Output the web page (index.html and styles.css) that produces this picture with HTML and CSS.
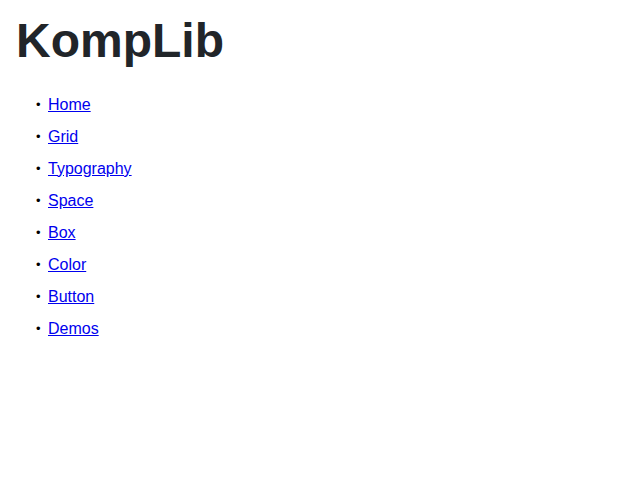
FILE: index.html
```html
<!DOCTYPE html>
<html>
<head>
<meta charset="utf-8">
<title>KompLib</title>
<link rel="stylesheet" href="styles.css">
</head>
<body>
<header class="site-header">
  <h1 class="title">KompLib</h1>
</header>
<nav class="nav">
  <ul class="nav-list">
    <li class="nav-item"><a class="nav-link" href="#">Home</a></li>
    <li class="nav-item"><a class="nav-link" href="#">Grid</a></li>
    <li class="nav-item"><a class="nav-link" href="#">Typography</a></li>
    <li class="nav-item"><a class="nav-link" href="#">Space</a></li>
    <li class="nav-item"><a class="nav-link" href="#">Box</a></li>
    <li class="nav-item"><a class="nav-link" href="#">Color</a></li>
    <li class="nav-item"><a class="nav-link" href="#">Button</a></li>
    <li class="nav-item"><a class="nav-link" href="#">Demos</a></li>
  </ul>
</nav>
</body>
</html>
```
FILE: styles.css
```css
body {
  margin: 8px;
  font-family: "Liberation Sans", Arial, sans-serif;
  font-size: 16px;
  color: #000;
  background: #fff;
}
.site-header {
  padding: 0 8px;
}
.title {
  margin: 4px 0 0;
  font-size: 48px;
  line-height: 1.2;
  font-weight: 700;
  color: #212529;
}
.nav-list {
  margin: 19px 0 16px;
  padding-left: 40px;
  list-style: none;
}
.nav-item {
  line-height: 32px;
}
.nav-item::before {
  content: "\2022";
  display: inline-block;
  width: 12px;
  margin-left: -12px;
  font-size: 13px;
  vertical-align: 1px;
}
.nav-link {
  color: #0000ee;
}
```
